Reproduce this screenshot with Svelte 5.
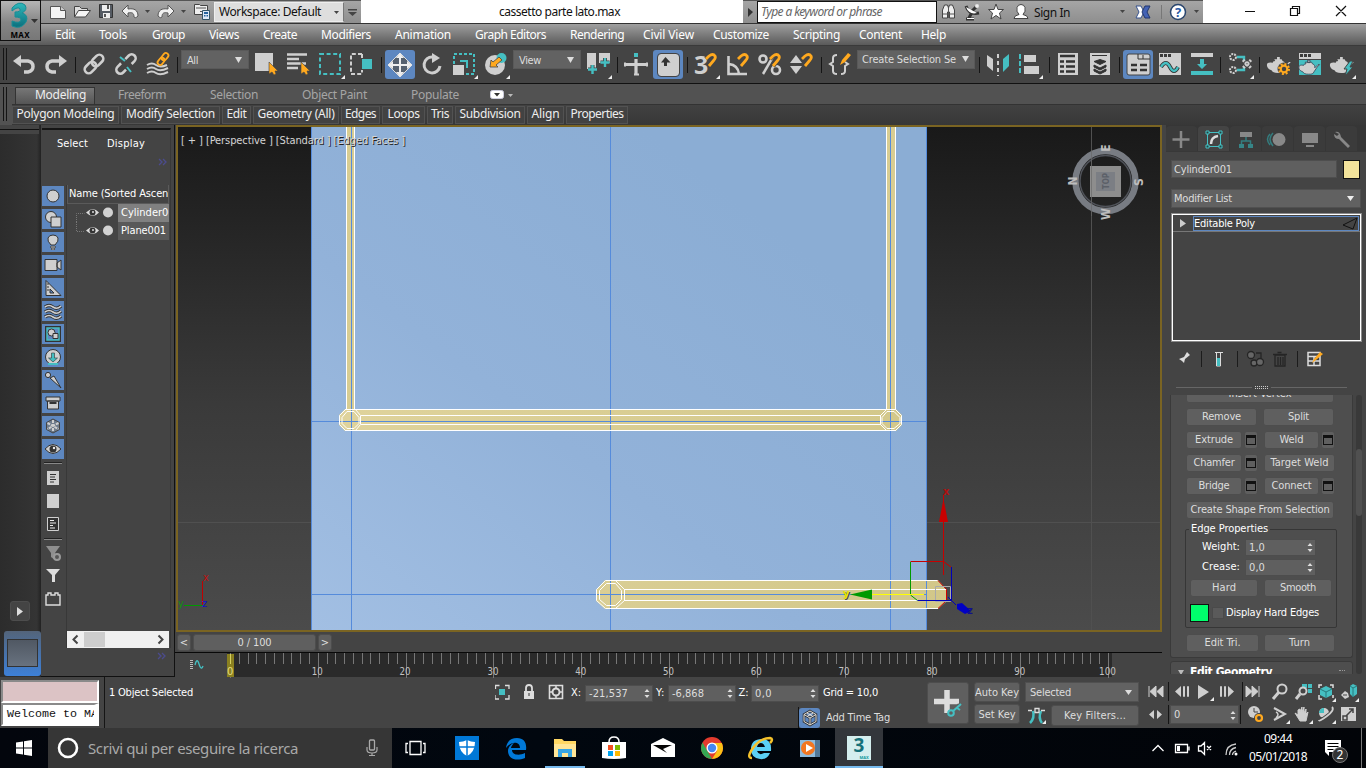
<script>
  // Spreads a label's letters so that it takes the given width.
  function fit(node, w) {
    const n = [...node.textContent].length;
    const nat = node.getBoundingClientRect().width;
    if (w) node.style.letterSpacing = (w - nat) / n + 'px';
  }
  // Every slot reaches to where the next one starts.
  const slots = (list, end) => list.map((s, i) => ({ x: s[0], kind: s[1], a: s[2], b: s[3], w: (list[i + 1] ? list[i + 1][0] : end) - s[0] }));

  const G = '#cfcfcf', T = '#45bfc2', O = '#ffa91f', D = '#3a3a3a';
  const corner = `<path d="M29 25v4h-4z" fill="#eee"/>`;
  const magnet = `<path d="M15 9l3-3q4-3 6 0 1 2-1 4l-5 6" fill="none" stroke="#444" stroke-width="4.500"/><path d="M15 9l3-3q4-3 6 0 1 2-1 4l-5 6" fill="none" stroke="${O}" stroke-width="2.800"/>`;
  const teapot = `<path d="M9 9h8l1 2c3 1 3 3 3 5l4-4h2l-3 3-4 6c-1 3-3 3-7 3s-6-1-7-3c-4-1-5-4-5-6s3-3 6-2q0-2 3-2zM12 6.500h3v3h-3z" fill="${G}"/>`;
  const winTop = `<path d="M4 3h22v6H4z" fill="${G}"/><path d="M5 4h3v3H5zM9 4h3v3H9zM13 4h3v3h-3z" fill="${D}"/>`;
  const cube = (x, y, c) => `<path d="M${x} ${y - 6}l6 3v6l-6 3-6-3v-6z" fill="${c}"/><path d="M${x - 6} ${y - 3}l6 3 6-3M${x} ${y}v6" fill="none" stroke="#28797c"/>`;

  const icons = {
    new: `<path d="M2.500 6.500h10l5 4v8h-15z" fill="#f4f4f4" stroke="#555"/><path d="M12.500 6.500v4h5" fill="#ccc" stroke="#555"/>`,
    open: `<path d="M2.500 17V6.500h5l2 2h6V11" fill="#ddd" stroke="#444"/><path d="M2.500 17l4-6.500h12l-5 6.500z" fill="#f5f5f5" stroke="#444"/>`,
    save: `<path d="M3.500 4.500h13v13h-13z" fill="#555b63" stroke="#333"/><path d="M6 5h8v6H6zM7 13h7v5H7z" fill="#eee"/><path d="M11 5h2v4h-2zM8 14h2v3H8z" fill="#555"/>`,
    tundo: `<path d="M2 11l6-6v4c6-1 10 1 10 7-2 2-3 2-4 1 0-4-2-5-6-4v4z" fill="#f0f0f0" stroke="#555"/>`,
    tredo: `<path d="M18 11l-6-6v4c-6-1-10 1-10 7 2 2 3 2 4 1 0-4 2-5 6-4v4z" fill="#f0f0f0" stroke="#555"/>`,
    caret: `<path d="M2 10h5l-2.500 3z" fill="#444"/>`,
    proj: `<path d="M2.500 4.500h5l1 1h7v9h-13z" fill="#eee" stroke="#444"/><path d="M8 11.500h6M4 8h10" stroke="#555"/><path d="M10.500 10.500h7v9h-7z" fill="#dce9f6" stroke="#356"/><path d="M12 12h4v2h-4zM12 15h1.500v1.500H12zM14.500 15H16v1.500h-1.500z" fill="#23629d"/>`,
    binoc: `<path d="M3.500 18v-8l2-5h3l1 3 1-3h3l2 5v8h-5v-6h-2v6z" fill="#eee" stroke="#444"/><path d="M9.500 6v12M4 14h5M10 14h5" stroke="#555"/>`,
    dish: `<path d="M3 6q3 9 13 7M3 19h8M6 18l3-6M9 11l6-6" fill="none" stroke="#333" stroke-width="3"/><path d="M3 7q3 8 11 6zM4 18h7v1H4z" fill="#fff"/><circle cx="14" cy="6" r="2" fill="#eee"/>`,
    star: `<path d="M10 4l2 5.500h5.500l-4 3.500 1.500 6-5-3.500-5 3.500 1.500-6-4-3.500H8z" fill="#fff" stroke="#444"/>`,
    user: `<path d="M3 18.500q0-3 5-4-3-3-2-7 1-3 4-3t4 3q1 4-2 7 5 1 5 4z" fill="#fff" stroke="#444"/>`,
    xchg: `<path d="M3 6h5l3 6-3 6H3l3-6z" fill="#fff" stroke="#37538f"/><path d="M17 6h-5l-3 6 3 6h5l-3-6z" fill="#4463b5" stroke="#22376e"/>`,
    help: `<circle cx="10" cy="12" r="7.500" fill="#fff" stroke="#29456d" stroke-width="1.500"/><text x="10" y="17" text-anchor="middle" font-size="13" font-weight="bold" font-family="Noto Sans" fill="#2a5ba6">?</text>`,
    undo: `<path d="M3 11l8-6v12z" fill="${G}"/><path d="M9 11h9q5 1 5 5.500t-5 5.500h-4" fill="none" stroke="${G}" stroke-width="3.500"/>`,
    redo: `<path d="M25 11l-8-6v12z" fill="${G}"/><path d="M19 11h-9q-5 1-5 5.500t5 5.500h4" fill="none" stroke="${G}" stroke-width="3.500"/>`,
    link: `<g fill="none" stroke="${G}" stroke-width="2.600" transform="rotate(-45 13 14)"><rect x="1.500" y="10" width="13" height="8" rx="4"/><rect x="11.500" y="10" width="13" height="8" rx="4"/></g>`,
    unlink: `<g fill="none" stroke="${G}" stroke-width="2.600" transform="rotate(-45 13 14)"><path d="M9 18H5a4 4 0 0 1 0-8h5M17 18h4a4 4 0 0 0 0-8h-5"/></g><path d="M7 7l5 4M14 17l4 5" stroke="${T}" stroke-width="2"/>`,
    bind: `<path d="M2 15q5-3 9 0t11 0M2 19q5-3 9 0t12-1M2 23q5-3 9 0t12-1" fill="none" stroke="${G}" stroke-width="2"/><g fill="none" stroke="${O}" stroke-width="1.800" transform="rotate(-50 18 9)"><rect x="11" y="6.500" width="8" height="5" rx="2.500"/><rect x="17" y="6.500" width="8" height="5" rx="2.500"/></g>`,
    select: `<path d="M3 3h18v18H3z" fill="${G}"/><path d="M17 12v12l3-2 2 3 2-1-1-3h3z" fill="${O}" stroke="#444" stroke-width=".6"/>`,
    byname: `<path d="M3 4.500h20M3 9h12M3 13.500h19M3 18h11" stroke="${G}" stroke-width="2.400"/><path d="M17 12v12l3-2 2 3 2-1-1-3h3z" fill="${O}" stroke="#444" stroke-width=".6"/>`,
    rect: `<path d="M4 4h20v20H4z" fill="none" stroke="${T}" stroke-width="2" stroke-dasharray="4 2.600"/>${corner}`,
    cross: `<path d="M15 4H4v20h11v-4M15 4v5" fill="none" stroke="${G}" stroke-width="2" stroke-dasharray="4 2.200"/><path d="M15 9h10v10H15z" fill="${T}"/>`,
    move: `<path d="M15 3l12 12-12 12L3 15z" fill="#55606e" stroke="#ddd"/><path d="M15 3l4 5h-3v6h6v-3l5 4-5 4v-3h-6v6h3l-4 5-4-5h3v-6H8v3l-5-4 5-4v3h6V8h-3z" fill="#eee"/>`,
    rotate: `<path d="M16 7A8 8 0 1 0 23 16" fill="none" stroke="${G}" stroke-width="3"/><path d="M15 3l8 5-8 5z" fill="${G}"/>`,
    scale: `<path d="M5 14V4h20v20H15" fill="none" stroke="${T}" stroke-width="2" stroke-dasharray="3 2"/><path d="M4 15h11v10H4z" fill="${G}"/><path d="M11 11h7v7" fill="none" stroke="${T}" stroke-width="2"/>${corner}`,
    place: `<circle cx="14" cy="15" r="10" fill="${G}"/><circle cx="20.500" cy="8" r="5" fill="${T}"/><path d="M9 17l1-7 2 2 6-5 3 3-6 5 2 2z" fill="${O}" stroke="#444" stroke-width=".8"/>${corner}`,
    pivot: `<path d="M4 3h9v16H4zM16 3h11v10H16z" fill="${G}"/><path d="M9.500 15v9M5 19.500h9M22 8v9M17.500 12.500h9" stroke="#444" stroke-width="4"/><path d="M9.500 15v9M5 19.500h9M22 8v9M17.500 12.500h9" stroke="${T}" stroke-width="2.400"/>${corner}`,
    manip: `<path d="M15 9v15M5 14.500h20" stroke="${G}" stroke-width="3.200"/><path d="M4 12.500v4M26 12.500v4M13 24.500h5" stroke="${G}" stroke-width="2"/><path d="M13 3h4v4h-4z" fill="${T}"/>`,
    keyb: `<rect x="5" y="4" width="21" height="22" rx="3" fill="${G}"/><path d="M8 12.500L12.500 7l5 5.500H14V16h-3v-3.500z" fill="#333"/><rect x="4.500" y="3.500" width="22" height="23" rx="3.500" fill="none" stroke="#444"/>`,
    snap: `<text x="3" y="24" font-size="25" font-weight="bold" font-family="Noto Sans" fill="${G}">3</text>${magnet}${corner}`,
    angle: `<path d="M5.500 6v18H24M6 14q9 1 10 10" fill="none" stroke="${G}" stroke-width="2.600"/>${magnet}`,
    pct: `<circle cx="8" cy="9" r="3.500" fill="none" stroke="${G}" stroke-width="2.600"/><circle cx="21" cy="20" r="4" fill="none" stroke="${G}" stroke-width="2.600"/><path d="M19 5L8 24" stroke="${G}" stroke-width="2.500"/>${magnet}`,
    spin: `<path d="M3 13l6-8 6 8zM3 16h12l-6 8z" fill="${G}"/>${magnet}`,
    brace: `<path d="M11 5q-4 0-4 3v4l-3 2 3 2v5q0 3 4 3M15 24q4 0 4-3v-5l3-2-3-2" fill="none" stroke="${G}" stroke-width="2"/><path d="M14 15l2-5 6-7 3 2-6 7z" fill="${O}"/>`,
    mirror: `<path d="M5 5l6 4v12l-6-5z" fill="${G}"/><path d="M27 4l-6 5v13l6-6z" fill="${T}"/><path d="M16 4v22" stroke="${G}" stroke-width="2" stroke-dasharray="4 3"/>`,
    align: `<path d="M6 4v21" stroke="${T}" stroke-width="2" stroke-dasharray="5 2"/><path d="M10 5h12v7H10zM10 16h15v8H10z" fill="${G}"/>${corner}`,
    layers: `<path d="M5 3h20v22H5z" fill="${G}"/><path d="M7 6h15M7 11.500h4M13 11.500h9M7 16.500h4M13 16.500h9M7 21.500h4M13 21.500h9" stroke="#333" stroke-width="2.300"/>`,
    stack: `<path d="M5 3h20v22H5z" fill="${G}"/><path d="M7 5.500h15M9 11.500l6-2 6 2-6 3zM9 15l6 3 6-3v2l-6 3-6-3zM9 19l6 3 6-3v2l-6 3-6-3z" fill="#333" stroke="#333"/>`,
    toggle: `<rect x="4" y="4" width="23" height="21" rx="2" fill="${G}" stroke="#444"/><path d="M15 4v5h5V5M20 9h7" fill="none" stroke="#333"/><path d="M8 15h6M17 15h7M8 20h6M17 20h7" stroke="#333" stroke-width="2.400"/>`,
    curve: `${winTop}<path d="M4 9h22v16H4z" fill="${G}"/><path d="M6 17q5-8 9 0t8 0" fill="none" stroke="#333" stroke-width="4"/><path d="M6 17q5-8 9 0t8 0" fill="none" stroke="${T}" stroke-width="2.300"/>`,
    dope: `<path d="M4 3h22v4H4z" fill="${G}"/><path d="M4 21h22v4H4zM13 9h4v5h3l-5 5-5-5h3z" fill="${T}"/>`,
    schem: `<g fill="none" stroke="${G}" stroke-width="2" stroke-dasharray="2 1"><circle cx="8" cy="7" r="3"/><circle cx="8" cy="20" r="3"/></g><path d="M12 7h7v4M12 20h7v-3" fill="none" stroke="${T}" stroke-width="2.400"/><path d="M18 10l8 8m0-8l-8 8" stroke="${G}" stroke-width="3" stroke-dasharray="2 1"/>${corner}`,
    rset: `<g transform="translate(2 1) scale(.92)">${teapot}</g><circle cx="20" cy="19" r="6.500" fill="#444"/><circle cx="20" cy="19" r="3.300" fill="none" stroke="${O}" stroke-width="2.200"/><circle cx="20" cy="19" r="5" fill="none" stroke="${O}" stroke-width="2" stroke-dasharray="2 1.900"/>`,
    rframe: `${winTop}<path d="M4 10h22v15H4z" fill="${T}"/><g transform="translate(3 5) scale(.8)" stroke="#345" stroke-width="1">${teapot}</g>`,
    rend: `<g transform="translate(2 1) scale(.92)">${teapot}</g><path d="M23 11l-6 8h3l-2 7 8-9h-3l3-6z" fill="${T}" stroke="#444" stroke-width="1"/>${corner}`
  };
  const title = slots([[48, 'new'], [72, 'open'], [96, 'save'], [120, 'tundo'], [143, 'caret'], [156, 'tredo'], [179, 'caret'], [192, 'proj']], 214);
  const account = slots([[939, 'binoc'], [963, 'dish'], [986, 'star'], [1011, 'user']], 1034);
  const menus = slots([[55, 'Edit', 20], [99, 'Tools', 28], [152, 'Group', 33], [209, 'Views', 30], [263, 'Create', 34], [321, 'Modifiers', 50], [395, 'Animation', 56], [475, 'Graph Editors', 71], [570, 'Rendering', 54], [643, 'Civil View', 51], [713, 'Customize', 56], [793, 'Scripting', 47], [859, 'Content', 43], [921, 'Help', 25]], 1366);
  const tools = slots([[0, 'grip'], [10, 'i', 'undo'], [42, 'i', 'redo'], [75, 'sep'], [81, 'i', 'link'], [113, 'i', 'unlink'], [145, 'i', 'bind'], [177, 'sep'], [181, 'combo', 'All', 11], [252, 'i', 'select'], [284, 'i', 'byname'], [316, 'i', 'rect'], [347, 'i', 'cross'], [381, 'sep'], [385, 'on', 'move'], [417, 'i', 'rotate'], [449, 'i', 'scale'], [481, 'i', 'place'], [513, 'combo', 'View', 22], [583, 'i', 'pivot'], [617, 'sep'], [621, 'i', 'manip'], [653, 'on', 'keyb'], [687, 'sep'], [691, 'i', 'snap'], [723, 'i', 'angle'], [755, 'i', 'pct'], [787, 'i', 'spin'], [821, 'sep'], [826, 'i', 'brace'], [857, 'combo', 'Create Selection Se', 94], [979, 'sep'], [982, 'i', 'mirror'], [1014, 'i', 'align'], [1049, 'sep'], [1053, 'i', 'layers'], [1085, 'i', 'stack'], [1119, 'sep'], [1123, 'on', 'toggle'], [1155, 'i', 'curve'], [1187, 'i', 'dope'], [1220, 'sep'], [1225, 'i', 'schem'], [1259, 'sep'], [1264, 'i', 'rset'], [1295, 'i', 'rframe'], [1327, 'i', 'rend']], 1366);
  const ribbon = [['Polygon Modeling', 107, 98], ['Modify Selection', 99, 89], ['Edit', 29, 20], ['Geometry (All)', 86, 77], ['Edges', 39, 31], ['Loops', 43, 32], ['Tris', 26, 18], ['Subdivision', 70, 61], ['Align', 37, 28], ['Properties', 62, 53]];

  const S = `stroke="#333" stroke-width="1"`;
  const side = [
    `<circle cx="11" cy="10" r="6" fill="${G}" ${S}/>`,
    `<circle cx="9" cy="8" r="5.500" fill="${G}" ${S}/><path d="M9 8h10v10H9z" fill="${G}" ${S}/>`,
    `<path d="M9 13q-4-4-3-7 1-3 5-3t5 3q1 3-3 7z" fill="${G}" ${S}/><path d="M8.500 15h5M9 17h4" stroke="#333" stroke-width="2"/><path d="M9 15h4M9.500 17h3" stroke="${G}"/>`,
    `<path d="M3 4.500h12v11H3zM15 8l4-3v10l-4-3z" fill="${G}" ${S}/>`,
    `<path d="M4 2.500v15h15zM8 11l4 4H8z" fill="${G}" fill-rule="evenodd" ${S}/><path d="M5 6h2M5 9h2M5 12h2" ${S}/>`,
    `<path d="M3 6q4-3 8 0t8-1M3 11q4-3 8 0t8-1M3 16q4-3 8 0t8-1" fill="none" stroke="#333" stroke-width="3.400"/><path d="M3 6q4-3 8 0t8-1M3 11q4-3 8 0t8-1M3 16q4-3 8 0t8-1" fill="none" stroke="${G}" stroke-width="1.600"/>`,
    `<path d="M3 2h16v16H3z" fill="#333"/><path d="M5 4h12v12H5z" fill="#5d87c0" stroke="${T}" stroke-width="1.500"/><circle cx="9.500" cy="8.500" r="3.500" fill="${G}" stroke="#333"/><path d="M11 9.500h5v5h-5z" fill="${G}" stroke="#333"/>`,
    `<circle cx="11" cy="10" r="7.500" fill="${G}" ${S}/><path d="M9.500 6h3v5h3L11 15l-4.500-4h3z" fill="${T}" stroke="#333" stroke-width=".6"/><path d="M6 17h10" stroke="${T}" stroke-width="2"/>`,
    `<path d="M8 8l4-2 7 12z" fill="${G}" ${S}/><circle cx="6" cy="5" r="2.600" fill="${G}" ${S}/>`,
    `<path d="M4 4h14v4H4zM5.500 8h11v8h-11z" fill="${G}" ${S}/><path d="M7.500 10h7" stroke="#333" stroke-width="2"/>`,
    `<path d="M11 3l6.500 3.500v7L11 17l-6.500-3.500v-7z" fill="#6f7c8c" stroke="#444"/><path d="M11 4v12M5.500 7l11 6M16.500 7l-11 6" stroke="${G}" stroke-width="2" stroke-dasharray="3 1"/>`,
    `<path d="M3 10q8-9 16 0-8 9-16 0z" fill="${G}" ${S}/><circle cx="11" cy="10" r="3.500" fill="#333"/><circle cx="12" cy="9" r="1.200" fill="#eee"/>`
  ];
  const side2 = [
    `<path d="M5 3h12v14H5z" fill="${G}"/><path d="M8 6.500h6M8 9h5M8 11.500h6M8 14h4" stroke="#333"/>`,
    `<path d="M5 3h12v14H5z" fill="${G}"/>`,
    `<path d="M5.500 3.500h11v13h-11z" fill="#333" stroke="${G}"/><path d="M8 6.500h4M8 9h6M8 11.500h3M8 14h5" stroke="#eee"/>`
  ];
  const side3 = [
    `<path d="M4 3h14l-5 7v7l-4-3v-4z" fill="#8e8e8e"/><circle cx="15" cy="14" r="3" fill="#555" stroke="#999" stroke-width="2"/>`,
    `<path d="M4 3h14l-5 6v7h-3v-7z" fill="#ddd"/>`,
    `<path d="M4 16V6h2V4h3v2h4V4h3v2h2v10z" fill="none" stroke="#ddd" stroke-width="1.400"/>`
  ];
  const tabs = [
    `<path d="M15 5v17M6.500 13.500h17" stroke="#888" stroke-width="2.500"/>`,
    `<path d="M9.500 6.500h13v14h-13z" fill="none" stroke="${T}"/><path d="M8 5h3v3H8zM21 5h3v3h-3zM8 19h3v3H8zM21 19h3v3h-3z" fill="#244" stroke="${T}"/><path d="M13 18q0-7 7-8" fill="none" stroke="#ddd" stroke-width="2.500"/>`,
    `<path d="M10 6h12v5H10z" fill="#888"/><path d="M16 11v4M11.500 19v-4h9v4" fill="none" stroke="#347d7f" stroke-width="1.500"/><path d="M9 18h5v4H9zM18 18h5v4h-5z" fill="#368587"/>`,
    `<circle cx="17" cy="13.500" r="6.500" fill="#888"/><path d="M11 7q-6 6 0 13M8 8q-5 5 0 11" fill="none" stroke="#347d7f" stroke-width="1.500"/>`,
    `<path d="M8 7h16v10H8zM12 19h8v2h-8z" fill="#888"/>`,
    `<path d="M9 6q5-1 6 5l9 9-2 2-9-9q-5 0-5-5l3 2 2-2z" fill="#888"/>`
  ];
  const majors = [10, 20, 30, 40, 50, 60, 70, 80, 90, 100];
  const minors = Array.from({ length: 101 }, (_, i) => i);
  const play = {
    start: `<path d="M2 4v11M9 4v11L3 9.500zM16 4v11l-6-5.500z" fill="${G}" stroke="${G}"/>`,
    prev: `<path d="M8 4v11L2 9.500z" fill="${G}"/><path d="M10.500 4.500h1v10h-1zM14.500 4.500h1v10h-1z" fill="none" stroke="${G}"/>`,
    play: `<path d="M3 3v14l11-7z" fill="${G}"/><path d="M19 15v4h-4z" fill="#eee"/>`,
    next: `<path d="M10 4v11l6-5.500z" fill="${G}"/><path d="M2.500 4.500h1v10h-1zM6.500 4.500h1v10h-1z" fill="none" stroke="${G}"/>`,
    end: `<path d="M2 4v11l6-5.500zM8 4v11l6-5.500zM15 4v11" fill="${G}" stroke="${G}"/>`
  };
  const c4 = `<path d="M21 16v4h-4z" fill="#eee"/>`;
  const nav = [
    `<circle cx="13" cy="7" r="4.500" fill="none" stroke="${G}" stroke-width="2"/><path d="M10 10l-6 7" stroke="${G}" stroke-width="3"/>`,
    `<path d="M10 2h5v4h-5zM16 2h4v4h-4zM16 7h4v4h-4z" fill="${T}"/><circle cx="11" cy="9" r="3.500" fill="#444" stroke="${G}" stroke-width="2"/><path d="M8 12l-4 5" stroke="${G}" stroke-width="3"/>`,
    `${cube(11, 10, T)}<path d="M4 6V3h3M15 3h3v3M18 13v3M4 13v4h3" fill="none" stroke="#ddd" stroke-width="1.500"/>${c4}`,
    `<path d="M12 4l3-2 4 2v8l-4 3-3-3z" fill="${T}"/><path d="M12 4l3 2 4-2M15 6v9" fill="none" stroke="#28797c"/><path d="M3 13l4-4 3 2 1 4-4 2z" fill="${G}"/><path d="M5 13h4" stroke="#444"/>${c4}`,
    `<path d="M5 4l11 6-11 6" fill="none" stroke="${G}" stroke-width="2"/><path d="M7 8q4 2 0 6" fill="none" stroke="${G}" stroke-width="1.500"/>${c4}`,
    `<path d="M6 11l-3-2 5 8h6l2-9-2 2V5l-2 4V3l-2 5V3L8 8V5L6 6z" fill="${G}" stroke="${G}"/>${c4}`,
    `<circle cx="9" cy="9" r="5" fill="${G}"/><path d="M9 4a5 5 0 0 0-5 5h5z" fill="${T}"/><path d="M17 3q3 3-5 9T4 16" fill="none" stroke="#444" stroke-width="3.500"/><path d="M17 3q3 3-5 9T4 16" fill="none" stroke="${G}" stroke-width="1.800"/>${c4}`,
    `<path d="M3 3h15v14H3z" fill="${G}"/><path d="M5 12h4v4H5zM8 12l7-7M11 5h4v4" fill="none" stroke="#444" stroke-width="1.500"/>`
  ];
  const apps = [
    `<path d="M-12-12h24v24h-24z" fill="#0078d7"/><path d="M0-8q4 2 8 2 0 10-8 14-8-4-8-14 4 0 8-2z" fill="#fff"/><path d="M0-8V8M-8-1H8" stroke="#0078d7" stroke-width="1.500"/>`,
    `<path d="M-10 0C-9-7-5-10 1-10c7 0 10 5 9 12H-4c0 5 7 6 13 3v5c-10 4-17 0-17-7 0-4 3-7 6-8-2 2-3 4-3 5H4c0-7-9-7-14 0z" fill="#0078d7"/>`,
    `<path d="M-11-9h8l2 2h12V9h-22z" fill="#ffd763"/><path d="M-11-4h22V9h-22z" fill="#ffe596"/><path d="M-7 9V1H7v8H3V5h-6v4z" fill="#37a5e4"/>`,
    `<path d="M-12-6h24v16q-12 2-24 0z" fill="#fff"/><path d="M-5-6q0-5 5-5t5 5" fill="none" stroke="#fff" stroke-width="1.500"/><path d="M-6-3h5v5h-5z" fill="#f25022"/><path d="M1-3h5v5H1z" fill="#7fba00"/><path d="M-6 3h5v5h-5z" fill="#00a4ef"/><path d="M1 3h5v5H1z" fill="#ffb900"/>`,
    `<path d="M-12-4L0-10l12 6V9h-24z" fill="#fff"/><path d="M-10-3H9L0 1l4 4z" fill="#050505"/>`,
    `<circle r="11" fill="#e33b2e"/><path d="M-9.500-5.500L0 11A11 11 0 0 1-9.500-5.500z" fill="#35a853"/><path d="M0-5H9.800A11 11 0 0 1 0 11l5-8z" fill="#fbc116"/><circle r="5.500" fill="#fff"/><circle r="4.200" fill="#4587f3"/>`,
    `<path d="M-10 1q0-10 11-10 10 0 9 12H-4q2 5 7 2h6q-3 7-10 6-9-1-9-10zm6-2H4q-1-4-4-4t-4 4z" fill="#5bd0f5"/><path d="M-9 10q-6 0 1-10T9-10q4 1 0 5" fill="none" stroke="#f5c22b" stroke-width="2.500"/>`,
    `<path d="M-10-8H8V9h-18z" fill="#8fbbdc"/><path d="M5-8h5V9H5z" fill="#527898"/><circle cx="-2" r="7" fill="#f37721"/><path d="M-4-4l7 4-7 4z" fill="#fff"/>`,
    `<path d="M-12-12h24v24h-24z" fill="#d4eeee"/><text x="0" y="4" text-anchor="middle" font-size="19" font-weight="bold" font-family="Noto Sans" fill="#16717a">3</text><text x="5" y="10.500" text-anchor="middle" font-size="4" font-weight="bold" font-family="Noto Sans" fill="#139b9f">MAX</text>`
  ];
</script>

{#snippet L(s, w, cls = '')}<span class="t {cls}" use:fit={w}>{s}</span>{/snippet}
{#snippet I(m, w, h)}<svg width={w} height={h} viewBox="0 0 {w} {h}">{@html m}</svg>{/snippet}
{#snippet btn(s, w, tw)}<div class="btn" style="width:{w}px">{@render L(s, tw)}</div>{/snippet}
{#snippet box()}<div class="btn box"><i></i></div>{/snippet}
{#snippet spinner(v, w, tw)}<div class="field" style="width:{w}px">{@render L(v, tw)}<svg width="6" height="11" viewBox="0 0 6 11"><path d="M3 1l2.500 3h-5zM3 10L.5 7h5z" fill="#ddd" /></svg></div>{/snippet}

<div class="app">
  <div class="logo">
    <svg width="39" height="39" viewBox="0 0 39 39">
      <defs><linearGradient id="lg" x2="0" y2="1"><stop offset="0" stop-color="#2fb9bb" /><stop offset="1" stop-color="#0b6f7d" /></linearGradient></defs>
      <path d="M11 7q7-8 13-3 3 5-3 8 7 2 4 9-5 8-14 4v-5q8 3 9-1 0-3-6-3v-5q6 0 5-3-2-3-8 2z" fill="url(#lg)" stroke="#1a8d96" />
      <path d="M30 18h7l-3.500 4z" fill="#333" />
      <text x="19" y="37" text-anchor="middle" font-size="8" font-weight="bold" textLength="19" font-family="Noto Sans">MAX</text>
    </svg>
  </div>
  <header>
    <div class="chrome qat">
      {#each title as s}<div class="slot" style="width:{s.w}px">{@render I(icons[s.kind], 20, 24)}</div>{/each}
      <div class="ws">{@render L('Workspace: Default', 102)}<svg width="6" height="4"><path d="M0 0h5L2.500 3z" fill="#444" /></svg></div>
      <svg width="16" height="24"><path d="M4 9h9v1.500H4zM4 12h9l-4.500 4z" fill="#444" /></svg>
    </div>
    <div class="doc">{@render L('cassetto parte lato.max', 121)}</div>
    <div class="chrome acct">
      <svg width="14" height="24"><path d="M5 8l5 4-5 5z" fill="#333" /></svg>
      <div class="key">{@render L('Type a keyword or phrase', 121)}</div>
      <div class="gap2"></div>
      {#each account as s}<div class="slot" style="width:{s.w}px">{@render I(icons[s.kind], 20, 24)}</div>{/each}
      <div class="sign">{@render L('Sign In', 36)}</div>
      <div class="slot" style="width:15px">{@render I(icons.caret, 10, 24)}</div>
      {@render I(icons.xchg, 20, 24)}<div class="vsep"></div>
      <div class="slot" style="width:24px">{@render I(icons.help, 20, 24)}</div>{@render I(icons.caret, 10, 24)}
    </div>
    <div class="win">
      <svg width="163" height="24" fill="none" stroke="#111" stroke-width="1.200"><path d="M42 11.500h10M87.500 8.500h7v7h-7zM89.500 8V6.500h7v7H95M133 6l10 10M143 6l-10 10" /></svg>
    </div>
  </header>
  <nav class="menu">{#each menus as m}<div style="width:{m.w}px">{@render L(m.kind, m.a)}</div>{/each}</nav>

  <div class="tools">
    {#each tools as s}
      <div class="slot" style="width:{s.w}px">
        {#if s.kind === 'i'}{@render I(icons[s.a], 30, 30)}
        {:else if s.kind === 'on'}<div class="on">{@render I(icons[s.a], 30, 30)}</div>
        {:else if s.kind === 'sep'}<div class="tsep"></div>
        {:else if s.kind === 'grip'}<div class="grip"></div>
        {:else}<div class="combo" class:wide={s.b > 50}>{@render L(s.a, s.b)}<svg width="7" height="7"><path d="M0 0h7L3.500 6z" fill="#ddd" /></svg></div>{/if}
      </div>
    {/each}
  </div>

  <div class="ribbon">
    <div class="grip tall"></div>
    <div class="rcol">
      <div class="rtabs">
        <div class="rtab">{@render L('Modeling', 51)}</div>
        <div style="width:92px">{@render L('Freeform', 48)}</div>
        <div style="width:92px">{@render L('Selection', 48)}</div>
        <div style="width:109px">{@render L('Object Paint', 65)}</div>
        <div style="width:79px">{@render L('Populate', 48)}</div>
        <svg width="24" height="20"><rect y="6.500" x=".5" width="13" height="8" rx="2" fill="#fff" stroke="#ccd" /><path d="M4 9h6l-3 3.500z" fill="#333" /><path d="M18 10h5l-2.500 3z" fill="#bbb" /></svg>
      </div>
      <div class="rrow">{#each ribbon as r}<div class="rbtn" style="width:{r[1]}px">{@render L(r[0], r[2])}</div>{/each}</div>
    </div>
  </div>

  <main>
    <aside class="dock">
      <div class="dtop"></div>
      <div class="darrow"><svg width="6" height="9"><path d="M0 0l6 4.500L0 9z" fill="#ddd" /></svg></div>
      <div class="dblue"><div></div></div>
    </aside>

    <aside class="explorer">
      <div class="exhead">
        <div class="exmenu">{@render L('Select', 31)}{@render L('Display', 38)}</div>
        <svg width="10" height="8"><path d="M1 1l3 3-3 3M5 1l3 3-3 3" fill="none" stroke="#4b4b8d" stroke-width="1.300" /></svg>
      </div>
      <div class="exbody">
        <div class="strip">
          {#each side as s}<div class="sb">{@render I(s, 22, 20)}</div>{/each}
          <hr />
          {#each side2 as s}<div class="sp">{@render I(s, 22, 20)}</div>{/each}
          <hr />
          {#each side3 as s}<div class="sp">{@render I(s, 22, 20)}</div>{/each}
        </div>
        <div class="tree">
          <div class="th">{@render L('Name (Sorted Ascending)', 124)}</div>
          {#each ['Cylinder001', 'Plane001'] as n, i}
            <div class="tr">
              <svg width="50" height="18"><path d={i ? 'M9.500 0v9.500h8' : 'M9.500 18V9.500h8'} fill="none" stroke="#777" stroke-dasharray="1 1" /><path d="M19 8.500q7-7 13 0-6 7-13 0z" fill="#ddd" /><circle cx="25.500" cy="8.500" r="3" fill="#333" /><circle cx="26" cy="8" r="1" fill="#ddd" /><circle cx="41" cy="8.500" r="5" fill="#d2d2d2" /></svg>
              <div class="tn" class:sel={!i}>{@render L(n, i ? 45 : 60)}</div>
            </div>
          {/each}
          <div class="hs"><svg width="102" height="17"><path d="M17 1h21v15H17z" fill="#cdcdcd" /><path d="M10.500 4.500l-4 4 4 4M91.500 4.500l4 4-4 4" fill="none" stroke="#444" stroke-width="2" /></svg></div>
        </div>
      </div>
      <div class="exfoot"><svg width="10" height="8"><path d="M1 1l3 3-3 3M5 1l3 3-3 3" fill="none" stroke="#4b4b8d" stroke-width="1.300" /></svg></div>
    </aside>

    <section class="center">
      <div class="view">
        <svg width="982" height="503" viewBox="178 127 982 503" font-family="DejaVu Sans Condensed, Noto Sans" font-size="11">
          <defs>
            <linearGradient id="bg" x2="0" y2="1"><stop offset="0" stop-color="#191919" /><stop offset=".55" stop-color="#3a3a3a" /><stop offset="1" stop-color="#4b4b4b" /></linearGradient>
            <linearGradient id="pl" x1="0" y1="1" x2=".75" y2=".2"><stop offset="0" stop-color="#a2bfe3" /><stop offset=".5" stop-color="#92b2d9" /><stop offset="1" stop-color="#8badd4" /></linearGradient>
            <linearGradient id="wd"><stop offset="0" stop-color="#dfd39c" /><stop offset="1" stop-color="#d2c789" /></linearGradient>
          </defs>
          <path d="M178 127h982v503H178z" fill="url(#bg)" />
          <path d="M178 522.500h982M1091.500 127v503" stroke="#505050" />
          <path d="M311 127h616v503H311z" fill="url(#pl)" />
          <path d="M346 127h9v290h-9zM886 127h10v290h-10z" fill="#d8cd92" />
          <path d="M345 409h551l6 6v10l-6 6H345l-6-6v-10zM605 580h333l9 10v11l-9 8H605l-9-8v-11z" fill="url(#wd)" />
          <g stroke="#558bdb" fill="none"><path d="M311.500 127v503M351.500 127v503M610.500 127v503M890.500 127v503M926.500 127v503M311 421.500h615M311 594.500h615" /></g>
          <g stroke="#fff" fill="none">
            <path d="M346.500 127v282M354.500 127v282M886.500 127v282M895.500 127v282M345 409.500h551M361 415.500h520M361 424.500h520M345 430.500h551" />
            <path d="M345.500 409.500h10l5 6v9l-5 6h-10l-6-6v-9zM347 411.500h7l5 6v6l-5 5h-7l-5-5v-6zM886.500 409.500h9l6 6v9l-6 6h-9l-6-6v-9zM887 411.500h7l6 6v6l-6 5h-7l-5-5v-6z" />
            <path d="M605.500 580.500h10l9 9v11l-9 8h-10l-9-8v-11zM606.500 583.500h9l6 7v9l-6 6h-9l-7-6v-9zM615 580.500h323M624 589.500h322M624 600.500h322M615 608.500h323" />
          </g>
          <path d="M938 580.500l8.500 9v11l-8.500 8" stroke="#d00000" fill="none" />
          <path d="M910.500 561.500h33l8 6M943.500 495v80" stroke="#c80000" fill="none" /><path d="M943.500 499l4.500 23h-9z" fill="#c80000" />
          <path d="M910.500 562v33l7 5.500" stroke="#009a00" fill="none" /><path d="M850 594.500l22-5v10z" fill="#009a00" />
          <path d="M872 594.500h52" stroke="#ff0" />
          <path d="M935.500 586.500h15v15h-15z" stroke="#aaa" fill="none" />
          <path d="M951.500 567v33.500h-34M948 597l8 8" stroke="#0000b8" fill="none" /><path d="M957 609v-5l5-1 9 8-6 3z" fill="#0000c4" />
          <g font-weight="bold"><text x="943" y="495" fill="#b01010">x</text><text x="844" y="598" fill="#444">y</text><text x="843" y="597" fill="#e6e600">y</text><text x="967" y="614" fill="#101090">z</text></g>
          <path d="M202.500 581v24" stroke="#c00000" /><path d="M184 605.500h19" stroke="#009a00" />
          <text x="203" y="581" fill="#c01010">x</text><text x="178" y="607" fill="#109010">y</text><text x="202" y="607" fill="#1010d0">z</text>
          <circle cx="1105.500" cy="181" r="30" fill="none" stroke="#787c83" stroke-width="6.500" />
          <circle cx="1105.500" cy="181" r="25.500" fill="none" stroke="#50535a" stroke-width="1.500" />
          <path d="M1090 166h31v31h-31z" fill="#8d8d8d" /><path d="M1096 172h19v19h-19z" fill="#7b7e84" /><path d="M1091.500 150v66" stroke="#666" stroke-opacity=".6" />
          <text transform="translate(1109 181) rotate(-90)" text-anchor="middle" font-size="8" font-weight="bold" fill="#5c6068">TOP</text>
          <g fill="#bdbdbd" font-size="12" font-weight="bold" text-anchor="middle"><text transform="translate(1110 148) rotate(-90)">E</text><text transform="translate(1077 181) rotate(-90)">N</text><text transform="translate(1143 182) rotate(-90)">S</text><text transform="translate(1110 214) rotate(-90)">W</text></g>
          <g font-size="11" lengthAdjust="spacing"><text x="182" y="145" textLength="224" fill="#222">[ + ] [Perspective ] [Standard ] [Edged Faces ]</text><text x="181" y="144" textLength="224" fill="#d4d4d4">[ + ] [Perspective ] [Standard ] [Edged Faces ]</text></g>
        </svg>
      </div>
      <div class="slider"><div class="btn" style="width:14px">&lt;</div><div class="btn" style="width:123px">{@render L('0 / 100', 34)}</div><div class="btn" style="width:14px">&gt;</div></div>
      <div class="track">
        <svg width="987" height="26" viewBox="175 652 987 26" font-family="DejaVu Sans Condensed, Noto Sans" font-size="11">
          <path d="M227 653h885v24H227z" fill="#2a2a2a" /><path d="M175 652.500h987" stroke="#080808" />
          {#each minors as m}<path d="M{Math.round(230 + m * 8.78) + 0.5} 653v{m % 10 ? 11 : 25}" stroke="#777" />{/each}
          {#each majors as m}<text x={229.5 + m * 8.78} y="675" text-anchor="middle" textLength={m === 100 ? 17 : 11} lengthAdjust="spacingAndGlyphs" fill="#c2c2c2">{m}</text>{/each}
          <path d="M227 654h7v23h-7z" fill="#8a8020" /><path d="M230.500 654v10" stroke="#d5cf60" /><text x="227" y="675" fill="#e5dd80" textLength="6">0</text>
          <path d="M190 660.500h3M190 662.500h3M190 664.500h3M190 666.500h3M190 668.500h3" stroke="#bbb" /><path d="M195 665q2-8 4-1t4 2" fill="none" stroke={T} stroke-width="1.300" />
        </svg>
      </div>
    </section>

    <aside class="panel">
      <div class="ptabs">{#each tabs as t, i}<div class="ptab" class:cur={i === 1}>{@render I(t, 31, 25)}</div>{/each}</div>
      <div class="prow"><div class="name">{@render L('Cylinder001', 58)}</div><div class="sw"></div></div>
      <div class="mlist">{@render L('Modifier List', 58)}<svg width="7" height="6"><path d="M0 0h7L3.500 5z" fill="#eee" /></svg></div>
      <div class="mstack"><div class="mrow"><svg width="20" height="14"><path d="M7 3l6 4.500-6 4z" fill="#ccc" /></svg><div class="ep">{@render L('Editable Poly', 61)}<svg width="16" height="13"><path d="M1 8l14-7-4 11z" fill="none" stroke="#111" /></svg></div></div></div>
      <svg width="196" height="34" viewBox="1166 342 196 34">
        <path d="M1177 367l5-6-3-2 5-2 3-5 3 3-5 4-1 4-2-2z" fill="#ddd" />
        <path d="M1201.500 351v16M1237.500 351v16M1297.500 351v16" stroke="#1c1c1c" />
        <path d="M1215 352.500h8M1216.500 353v13h4v-13" fill="#444" stroke="#ddd" /><path d="M1217 358h3v8h-3z" fill={T} />
        <g fill="none" stroke="#252525" stroke-width="1.300"><circle cx="1251" cy="355" r="3.500" fill="#666" /><circle cx="1254" cy="363" r="3" fill="#666" /><circle cx="1260" cy="362" r="3.500" fill="#666" /><path d="M1256 353h5v5M1275 355h10v11h-10zM1273 354.500h14M1277.500 352.500h4M1278 357v8M1280.500 357v8M1283 357v8" /></g>
        <path d="M1308 352.500h12v13h-12zM1308 356.500h12M1308 361h12M1314 357v8" fill="none" stroke="#ddd" stroke-width="1.500" /><path d="M1312 363l2-4 6-7 3 2-7 6z" fill={O} />
      </svg>
      <div class="pgrip"><hr /><i></i><hr /></div>
      <div class="roll">
        <div class="rolls">
          <div class="rp">
            <div class="bl first">{@render btn('Insert Vertex', 148, 63)}</div>
            <div class="bl">{@render btn('Remove', 71, 39)}{@render btn('Split', 71, 21)}</div>
            <div class="bl">{@render btn('Extrude', 56, 38)}{@render box()}{@render btn('Weld', 55, 24)}{@render box()}</div>
            <div class="bl">{@render btn('Chamfer', 56, 41)}{@render box()}{@render btn('Target Weld', 71, 58)}</div>
            <div class="bl">{@render btn('Bridge', 56, 31)}{@render box()}{@render btn('Connect', 55, 40)}{@render box()}</div>
            <div class="bl cs">{@render btn('Create Shape From Selection', 148, 139)}</div>
            <fieldset>
              <legend>{@render L('Edge Properties', 77)}</legend>
              <div class="fl">{@render L('Weight:', 38)}{@render spinner('1,0', 71, 16)}</div>
              <div class="fl">{@render L('Crease:', 38)}{@render spinner('0,0', 71, 16)}</div>
              <div class="fl two">{@render btn('Hard', 68, 24)}{@render btn('Smooth', 68, 36)}</div>
              <div class="fl dh"><b></b><s></s>{@render L('Display Hard Edges', 93)}</div>
            </fieldset>
            <div class="bl last">{@render btn('Edit Tri.', 73, 36)}{@render btn('Turn', 71, 21)}</div>
          </div>
          <div class="eg"><svg width="6" height="5"><path d="M0 0h6L3 5z" fill="#bbb" /></svg>{@render L('Edit Geometry', 82)}<i></i></div>
        </div>
        <div class="sc"><div></div></div>
      </div>
    </aside>
  </main>

  <footer class="status">
    <div class="listener"><div class="pink"></div><div class="white">{@render L('Welcome to MAXScript', 140)}</div></div>
    <div class="msg">{@render L('1 Object Selected', 84)}</div>
    <div class="coords">
      <div class="crow">
        <svg width="76" height="20" viewBox="495 682 76 20">
          <path d="M499 689h6v6h-6z" fill={T} /><path d="M495.500 689v-3.500h4M505 685.500h4v3.500M509 695v4h-4M499 699h-4v-4" fill="none" stroke="#ddd" stroke-width="1.300" />
          <path d="M524 691h10v8h-10z" fill="#ddd" /><path d="M526 691v-3q0-3 3-3t3 3v3" fill="none" stroke="#ddd" stroke-width="1.800" /><path d="M529 693v3" stroke="#333" />
          <path d="M549.500 685.500h13v13h-13z" fill="none" stroke="#ddd" stroke-width="1.600" /><circle cx="556" cy="692" r="3.500" fill="none" stroke="#ddd" stroke-width="2" /><path d="M556 685v4M556 695v4M549 692h4M559 692h4" stroke="#ddd" stroke-width="1.500" />
        </svg>
        <div class="ax">{@render L('X:', 10)}</div>{@render spinner('-21,537', 68, 39)}
        <div class="ax">{@render L('Y:', 9)}</div>{@render spinner('-6,868', 68, 32)}
        <div class="ax">{@render L('Z:', 10)}</div>{@render spinner('0,0', 68, 17)}
        <div class="ax">{@render L('Grid = 10,0', 55)}</div>
      </div>
      <div class="tag"><div class="tagb">{@render I(`<path d="M11 3l6 3.500v7L11 17l-6-3.500v-7zM5 6.500l6 3.500 6-3.500M11 10v7" fill="none" stroke="#333" stroke-width="2.600"/><path d="M11 3l6 3.500v7L11 17l-6-3.500v-7zM5 6.500l6 3.500 6-3.500M11 10v7M8 5l6 3.500M14 5L8 8.500" fill="none" stroke="#ddd"/>`, 21, 20)}</div>{@render L('Add Time Tag', 64)}</div>
    </div>
    <div class="btn big"><svg width="42" height="42"><path d="M20 8v23M7 19.500h25" stroke="#ddd" stroke-width="5.500" /><path d="M25 31l8-8M31 25l3 3" stroke="#5f5f5f" stroke-width="5" /><path d="M25 30l9-8M30 26l3 2" stroke={T} stroke-width="2" /><circle cx="24" cy="31" r="2.800" fill="#5f5f5f" stroke={T} stroke-width="2" /></svg></div>
    <div class="kcol">{@render btn('Auto Key', 46, 44)}{@render btn('Set Key', 46, 37)}</div>
    <div class="kcol k2">
      <div class="selc">{@render L('Selected', 41)}<svg width="7" height="6"><path d="M0 0h7L3.500 5z" fill="#ddd" /></svg></div>
      <div class="kf"><svg width="25" height="21"><path d="M4 18q5-5 3-12M16 18q-4-5-1-12" fill="none" stroke={T} stroke-width="2.500" /><path d="M9 3.500h4v4H9zM2 5.500h4M15 5.500h4" fill="none" stroke="#ddd" stroke-width="1.300" /><path d="M20 15v4h-4z" fill="#eee" /></svg>{@render btn('Key Filters...', 88, 62)}</div>
    </div>
    <div class="play">
      <div class="prw">{@render I(play.start, 21, 20)}<u class="wide"></u>{@render I(play.prev, 22, 20)}{@render I(play.play, 23, 20)}{@render I(play.next, 24, 20)}<u></u>{@render I(play.end, 18, 20)}</div>
      <div class="prw p2"><svg width="21" height="20"><path d="M7 5v9L2 9.500zM10 5v9l5-4.500z" fill={G} /></svg><u></u>{@render spinner('0', 69, 6)}<u></u>{@render I(`<circle cx="8" cy="7" r="6" fill="${G}"/><path d="M8 3v4h4" fill="none" stroke="#444"/><circle cx="13" cy="13" r="5" fill="#444"/><circle cx="13" cy="13" r="3" fill="#444" stroke="${O}" stroke-width="2.200"/>`, 19, 20)}</div>
    </div>
    <div class="nav">{#each nav as n}{@render I(n, 23, 22)}{/each}</div>
  </footer>

  <div class="task">
    <div class="start"><svg width="16" height="16"><path d="M0 2.500l7-1V7.500H0zM8 1.300L16 0v7.500H8zM0 8.500h7v6l-7-1zM8 8.500h8V16l-8-1.300z" fill="#fff" /></svg></div>
    <div class="search"><svg width="22" height="22"><circle cx="11" cy="11" r="9" fill="none" stroke="#fff" stroke-width="2.600" /></svg>{@render L('Scrivi qui per eseguire la ricerca', 210)}<svg class="mic" width="12" height="18"><rect x="3.500" y="1" width="5" height="10" rx="1" fill="none" stroke="#aaa" stroke-width="1.300" /><path d="M1 8v3q0 3 5 3t5-3V8M6 14v3M3 16.500h6" fill="none" stroke="#aaa" stroke-width="1.200" /></svg></div>
    <div class="tv"><svg width="22" height="16"><path d="M5 1.500h11v13H5zM3 3.500H1v9h2M18 3.500h2v9h-2" fill="none" stroke="#fff" stroke-width="1.300" /></svg></div>
    {#each apps as a, i}<div class="ti" class:run={i === 2} class:act={i === 8}><svg width="26" height="26" viewBox="-13 -13 26 26">{@html a}</svg></div>{/each}
    <div class="tray">
      <svg width="98" height="40" viewBox="1149 728 98 40" fill="none" stroke="#fff" stroke-width="1.300"><path d="M1153.500 751l5.500-5.500 5.500 5.500M1176.500 744.500h12v8h-12zM1190 746.500v4" /><path d="M1178 746h3v5h-3z" fill="#fff" stroke="none" /><path d="M1199.500 746v5h2.500l3.500 3.500v-12l-3.500 3.500zM1208 746l4 4M1212 746l-4 4" /><path d="M1227 755q0-10 10-11M1230.500 755q0-6 6.500-7.500M1233.500 755q0-3 3.500-4" stroke="#ccc" /><circle cx="1237" cy="754" r="1.500" fill="#fff" stroke="none" /></svg>
      <div class="clock">{@render L('09:44', 28)}{@render L('05/01/2018', 58)}</div>
      <svg width="51" height="40"><path d="M15 12h16v12H19v4l-4-4z" fill="#fff" /><path d="M17.500 15.500h11M17.500 18.500h11M17.500 21.500h6" stroke="#000" /><circle cx="30" cy="27" r="7.500" fill="#333" stroke="#777" /><text x="30" y="31" text-anchor="middle" font-size="12" fill="#fff" font-family="Noto Sans">2</text></svg>
      <div class="peek"></div>
    </div>
  </div>
</div>

<style>
  :global(body) { background: #444; overflow: hidden; }
  .app { position: relative; width: 1366px; height: 768px; display: flex; flex-direction: column; background: #444; font: 12px/14px "Noto Sans", sans-serif; color: #eee; overflow: hidden; }
  .app * { box-sizing: border-box; flex-shrink: 0; }
  svg { display: block; }
  .t { display: inline-block; white-space: pre; }
  .slot { display: flex; }
  .logo { position: absolute; left: 0; top: 0; width: 41px; height: 41px; border: 1px solid #111; background: linear-gradient(#b5b5b5, #858585 55%, #777); z-index: 2; }
  header { display: flex; height: 24px; background: #fff; border-bottom: 1px solid #333; }
  .chrome { display: flex; background: linear-gradient(#a5a5a5, #8e8e8e); border-top: 1px solid #555; height: 23px; }
  .chrome svg { margin-top: -1px; }
  .qat { width: 361px; padding-left: 48px; }
  .ws { width: 130px; height: 20px; margin-top: 1px; background: #dedede; border: 1px solid #eee; border-right-color: #777; color: #111; display: flex; align-items: center; justify-content: space-between; padding: 0 3px 1px 4px; }
  .ws svg { margin-top: 2px; }
  .doc { width: 382px; color: #111; padding: 5px 0 0 138px; }
  .acct { width: 460px; color: #111; }
  .key { width: 180px; height: 22px; background: #fff; border: 1px solid #111; font-style: italic; color: #666; padding: 3px 0 0 3px; }
  .gap2 { width: 2px; }
  .sign { width: 84px; padding-top: 5px; }
  .vsep { width: 1px; height: 14px; margin: 4px 6px 0 8px; background: #777; }
  .menu { display: flex; height: 21px; padding: 4px 0 0 55px; background: linear-gradient(#a0a0a0, #7c7c7c 50%, #5a5a5a); color: #fff; }
  .tools { display: flex; height: 39px; padding-top: 5px; border-bottom: 1px solid #111; border-top: 1px solid #3a3a3a; background: #444; }
  .tools .slot { height: 30px; margin-top: -1px; }
  .on { width: 30px; height: 29px; background: #5d87c0; border-radius: 3px; }
  .tsep { width: 1px; height: 16px; margin-top: 7px; background: #151515; }
  .grip { width: 4px; height: 32px; margin: -2px 0 0 3px; border: solid #151515; border-width: 0 1px; }
  .combo { width: 68px; height: 19px; background: #626262; border: 1px solid #595959; display: flex; justify-content: space-between; padding: 3px 6px 0 5px; color: #ddd; }
  .combo.wide { width: 118px; padding: 2px 5px 0 4px; }
  .combo svg { margin-top: 3px; }
  .combo, .explorer, .panel, .status, .slider { font: 11px/14px "DejaVu Sans Condensed", "Noto Sans", sans-serif; }
  .ribbon { display: flex; height: 41px; background: #525252; }
  .grip.tall { height: 34px; margin: 3px 5px 0 3px; }
  .rcol { width: 1354px; }
  .rtabs { display: flex; height: 20px; color: #a5a5a5; padding-left: 3px; }
  .rtabs > div { padding-top: 4px; }
  .rtab { width: 80px; height: 17px; margin: 3px 23px 0 0; background: linear-gradient(#777, #555); border: 1px solid #333; border-bottom: 0; color: #eee; padding: 0 0 0 19px !important; }
  .rrow { display: flex; gap: 2px; height: 21px; background: linear-gradient(#414141, #373737); padding: 1px 0; border-top: 1px solid #333; }
  .rbtn { height: 18px; border: 1px solid #525252; text-align: center; padding-top: 0; background: #424242; }
  main { display: flex; height: 552px; }
  .dock { width: 41px; background: linear-gradient(90deg, #2c2c2c, #343434 90%, #222); display: flex; flex-direction: column; }
  .dtop { height: 9px; width: 39px; border-top: 4px solid #444; border-bottom: 4px solid #444; background: #111; margin-bottom: 467px; }
  .darrow { width: 20px; height: 20px; margin-left: 10px; background: #444; border: 1px solid #4d4d4d; border-radius: 3px; display: grid; place-items: center; margin-bottom: 10px; }
  .dblue { width: 37px; height: 45px; margin-left: 4px; border-radius: 3px; background: linear-gradient(#53647a, #3d80d8); padding: 8px 3px; }
  .dblue div { height: 28px; background: linear-gradient(#505863, #68727f); border: 1px solid #333; }
  .explorer { width: 134px; display: flex; flex-direction: column; border-right: 1px solid #111; border-bottom: 1px solid #111; background: #444; color: #fff; }
  .exhead { height: 57px; width: 129px; margin: 3px 0 0 1px; border-top: 2px solid #151515; border-right: 1px solid #383838; }
  .exmenu { display: flex; gap: 19px; padding: 7px 0 0 15px; margin-bottom: 7px; }
  .exhead svg, .exfoot svg { margin-left: 116px; }
  .exbody { display: flex; height: 463px; width: 130px; border-right: 1px solid #383838; }
  .strip { width: 25px; padding-left: 1px; }
  .sb { width: 22px; height: 20px; background: #5d87c0; margin-bottom: 3px; }
  .sb:first-child { margin-top: 1px; }
  .sp { height: 23px; }
  .strip hr { width: 18px; height: 2px; margin: 1px 2px 4px; border: 0; border-top: 1px solid #222; border-bottom: 1px solid #888; }
  .strip .sp + hr { margin: 1px 2px 3px; }
  .tree { width: 103px; border-left: 1px solid #383838; overflow: hidden; display: flex; flex-direction: column; }
  .th { height: 21px; border: 1px solid #5a5a5a; padding: 3px 0 0 1px; margin: -2px 0 0; overflow: hidden; }
  .tr { display: flex; height: 18px; }
  .tn { width: 60px; background: #595959; padding: 2px 3px; overflow: hidden; margin-left: 1px; }
  .tn.sel { background: #808080; }
  .hs { margin-top: 391px; background: #f0f0f0; height: 17px; }
  .exfoot { padding-top: 4px; }
  .center { width: 987px; display: flex; flex-direction: column; background: #444; }
  .view { width: 986px; height: 507px; margin-left: 1px; border: 2px solid #7a6422; }
  .slider { display: flex; gap: 2px; padding: 2px 0 0 2px; height: 20px; }
  .slider .btn { height: 17px; padding-top: 1px; }
  .btn { height: 18px; background: #5f5f5f; border: 1px solid #4d4d4d; border-radius: 3px; color: #ddd; display: flex; align-items: center; justify-content: center; }
  .panel { width: 204px; padding-left: 4px; background: #444; display: flex; flex-direction: column; }
  .ptabs { display: flex; gap: 1px; height: 27px; border-bottom: 1px solid #383838; background: #363636; padding-top: 1px; }
  .ptab { background: #3b3b3b; width: 31px; border-radius: 4px 4px 0 0; }
  .cur { background: #444; }
  .prow { display: flex; gap: 6px; margin: 8px 0 0 5px; height: 18px; }
  .name { width: 166px; background: #5f5f5f; padding: 2px; color: #ddd; border: 1px solid #4e4e4e; }
  .sw { width: 17px; height: 19px; background: #f3e39b; border: 1px solid #111; }
  .mlist { width: 190px; height: 19px; background: #616161; margin: 11px 0 5px 5px; display: flex; align-items: center; justify-content: space-between; padding: 1px 6px 0 2px; border: 1px solid #505050; color: #ddd; }
  .mstack { width: 191px; height: 129px; border: 2px solid #fff; outline: 1px solid #8b8b8b; outline-offset: -1px; margin-left: 5px; }
  .mrow { display: flex; height: 17px; border-bottom: 1px solid #777; padding: 1px 0 0 0; }
  .ep { width: 166px; height: 15px; border: 1px solid #5d87c0; display: flex; justify-content: space-between; color: #fff; line-height: 14px; }
  .pgrip { display: flex; width: 196px; padding: 10px 15px 0 10px; gap: 3px; height: 19px; }
  .pgrip hr { flex: 1; margin: 1px 0; height: 1px; border: 0; background: #666; }
  .pgrip i { width: 13px; height: 3px; border-top: 1px dotted #ccc; border-bottom: 1px dotted #ccc; }
  .roll { display: flex; height: 280px; margin-left: 1px; gap: 4px; overflow: hidden; }
  .rolls { width: 186px; height: 279px; padding-left: 3px; overflow: hidden; display: flex; flex-direction: column; }
  .rp { height: 263px; border: 1px solid #3a3a3a; border-top: 0; background: #4e4e4e; border-radius: 0 0 3px 3px; padding-left: 15px; }
  .bl { display: flex; height: 23px; gap: 2px; }
  .bl .btn + .btn:not(.box) { margin-left: 4px; }
  .first { margin-top: -10px; }
  .box { width: 14px; padding: 0; }
  .box i { width: 10px; height: 10px; border: 1px solid #111; border-top-width: 3px; }
  .cs { margin-top: 1px; }
  .last .btn + .btn { margin-left: 3px !important; }
  fieldset { width: 152px; height: 105px; margin: -1px 0 6px -1px; padding: 0 0 0 4px; border: 1px solid #363636; color: #fff; border-radius: 2px; }
  legend { padding: 0 2px; margin-left: -1px; line-height: 12px; margin-bottom: 2px; }
  .fl { display: flex; height: 20px; align-items: center; gap: 5px; padding-left: 12px; }
  .field { height: 17px; background: #5f5f5f; border: 1px solid #4d4d4d; color: #ddd; display: flex; align-items: center; justify-content: space-between; padding: 1px 2px 0 3px; }
  .two { padding: 0; height: 22px; gap: 6px; }
  .dh { padding: 0; margin-top: 3px; height: 22px; }
  .dh b { width: 19px; height: 18px; background: #00ff6c; border: 1px solid #111; margin-right: -2px; }
  .dh s { width: 12px; height: 12px; background: #5a5a5a; border: 1px solid #4a4a4a; margin-right: -3px; }
  .eg { display: flex; align-items: center; height: 20px; margin-top: 3px; padding: 2px 7px 0; gap: 6px; background: #4e4e4e; border: 1px solid #3a3a3a; border-radius: 3px; font-weight: bold; color: #fff; font-size: 12px; }
  .eg i { margin-left: auto; width: 6px; height: 5px; border-top: 1px dotted #999; border-bottom: 1px dotted #999; }
  .sc { width: 6px; background: #393939; height: 279px; border-radius: 3px; padding-top: 54px; margin-left: -1px; }
  .sc div { height: 67px; background: #505050; border-radius: 3px; }
  .status { display: flex; height: 51px; color: #fff; }
  .listener { width: 105px; border-right: 1px solid #151515; padding: 3px 0 0 1px; }
  .pink, .white { width: 98px; height: 23px; border: 2px solid #8a8a8a; border-right-color: #fff; border-bottom-color: #fff; background: #dcc3c5; }
  .white { background: #fff; color: #111; font: 11.670px/14px "Liberation Mono", monospace; padding: 2px 0 0 4px; overflow: hidden; border-right-width: 5px; }
  .msg { width: 390px; padding: 9px 0 0 4px; }
  .coords { width: 432px; padding-top: 6px; }
  .crow { display: flex; align-items: center; height: 20px; }
  .crow > svg { margin-top: -2px; }
  .ax { width: 15px; text-align: center; white-space: nowrap; }
  .ax:last-child { text-align: left; padding-left: 4px; }
  .crow .ax:first-of-type { width: 14px; text-align: left; }
  .tag { display: flex; gap: 6px; align-items: center; margin: 4px 0 0 303px; height: 21px; color: #ddd; border-left: 1px solid #151515; }
  .tagb { width: 21px; height: 20px; background: #5d87c0; border-radius: 3px; }
  .big { width: 42px; height: 42px; margin: 5px 5px 0 0; }
  .kcol { display: flex; flex-direction: column; gap: 2px; padding-top: 5px; width: 51px; }
  .kcol .btn { height: 20px; padding-top: 1px; }
  .k2 { width: 122px; gap: 3px; }
  .selc { width: 114px; height: 20px; background: #626262; border: 1px solid #505050; display: flex; justify-content: space-between; align-items: center; padding: 1px 6px 0 4px; color: #ddd; }
  .kf { display: flex; height: 21px; margin-left: 1px; }
  .kf .btn { height: 21px; }
  .play { width: 122px; padding-top: 5px; }
  .prw { display: flex; height: 23px; }
  .prw u { width: 1px; height: 19px; background: #151515; margin: 0 1px 0 0; }
  .prw u.wide { margin-right: 4px; }
  .prw.p2 .field { height: 19px; margin-right: 1px; }
  .prw.p2 u + svg { margin-left: 4px; }
  .nav { display: grid; grid-template-columns: repeat(4, 23px); grid-auto-rows: 22px; margin: 5px 0 0 0; width: 96px; }
  .task { display: flex; height: 40px; background: linear-gradient(90deg, #03060d, #01070f 40%, #020408); color: #fff; }
  .start { width: 48px; display: grid; place-items: center; }
  .search { width: 344px; background: #363636; display: flex; align-items: center; padding-left: 9px; gap: 9px; color: #a9a9a9; font: 15px/20px "Noto Sans", sans-serif; }
  .mic { margin-left: 59px; }
  .tv { width: 48px; display: grid; place-items: center; margin-right: 3px; }
  .ti { width: 48.900px; display: grid; place-items: center; }
  .run { background: linear-gradient(#76b9ed, #76b9ed) 50% 100% / 40px 2px no-repeat; }
  .act { width: 48px; margin-left: 1px; background: #33363b; border-bottom: 2px solid #76b9ed; padding-top: 2px; }
  .tray { display: flex; margin-left: auto; }
  .clock { width: 64px; display: flex; flex-direction: column; align-items: center; gap: 4px; padding-top: 4px; }
  .peek { width: 5px; border-left: 1px solid #777; }
</style>
